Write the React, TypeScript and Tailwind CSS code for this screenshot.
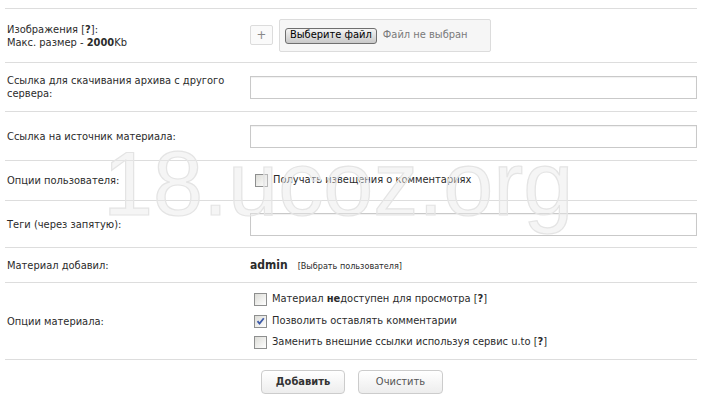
import React from "react";

function Box({ checked = false }: { checked?: boolean }) {
  return (
    <span className="relative inline-flex w-[13px] h-[13px] shrink-0 border border-[#8e8f8f] bg-gradient-to-br from-[#dcdcd7] to-[#ffffff]">
      {checked && (
        <svg viewBox="0 0 11 11" className="absolute left-0 top-0 w-[11px] h-[11px]">
          <path d="M2.5 5.2 L4.5 7.5 L8.8 2.2" fill="none" stroke="#3d5aa8" strokeWidth="1.8" />
        </svg>
      )}
    </span>
  );
}

function Help() {
  return (
    <span>
      [<b className="font-bold">?</b>]
    </span>
  );
}

function TextField() {
  return (
    <div className="w-[447px] h-[23px] border border-[#c9c9c9] bg-white shadow-[inset_0_1px_1px_rgba(0,0,0,0.06)]" />
  );
}

export default function App() {
  const row = "flex items-center border-b border-[#dddddd]";
  const label = "w-[245px] pl-[2px] leading-[13px]";

  return (
    <div className="relative w-[709px] h-[412px] overflow-hidden bg-white text-[11px] text-[#2b2b2b] font-['Tahoma','DejaVu_Sans_Condensed','Liberation_Sans',sans-serif]">
      <div className="pt-2 pl-[5px] w-[697px]">
        <div className="border-t border-[#dddddd]">
          {/* images */}
          <div className={`${row} h-[54px]`}>
            <div className={label}>
              <div>
                Изображения <Help />:
              </div>
              <div>
                Макс. размер - <b className="font-bold">2000</b>Kb
              </div>
            </div>
            <div className="flex items-center gap-[6px]">
              <div className="w-[23px] h-[20px] flex items-center justify-center border border-[#dcdcdc] rounded-[2px] bg-[#fafafa] text-[#888] text-[13px] mb-[2px]">
                +
              </div>
              <div className="w-[212px] h-[33px] flex items-center gap-[6px] pl-[5px] border border-[#dcdcdc] rounded-[2px] bg-[#f6f6f6]">
                <div className="h-[16px] px-[4px] flex items-center border border-[#6f6f6f] rounded-[3px] bg-gradient-to-b from-[#f4f4f4] to-[#c8c8c8] text-[11px] text-black whitespace-nowrap">
                  Выберите файл
                </div>
                <span className="text-[11px] text-[#7a7a7a] whitespace-nowrap">Файл не выбран</span>
              </div>
            </div>
          </div>

          {/* archive */}
          <div className={`${row} h-[49px]`}>
            <div className={label}>
              <div>Ссылка для скачивания архива с другого</div>
              <div>сервера:</div>
            </div>
            <TextField />
          </div>

          {/* source */}
          <div className={`${row} h-[49px]`}>
            <div className={label}>Ссылка на источник материала:</div>
            <TextField />
          </div>

          {/* user options */}
          <div className={`${row} h-[40px]`}>
            <div className={label}>Опции пользователя:</div>
            <div className="flex items-center gap-[5px] pl-[5px]">
              <Box />
              <span>Получать извещения о комментариях</span>
            </div>
          </div>

          {/* tags */}
          <div className={`${row} h-[47px]`}>
            <div className={label}>Теги (через запятую):</div>
            <TextField />
          </div>

          {/* author */}
          <div className={`${row} h-[35px]`}>
            <div className={label}>Материал добавил:</div>
            <div className="flex items-baseline gap-[10px]">
              <b className="font-bold text-[12px]">admin</b>
              <span className="text-[9px]">[Выбрать пользователя]</span>
            </div>
          </div>

          {/* material options */}
          <div className={`${row} h-[77px]`}>
            <div className={label}>Опции материала:</div>
            <div className="flex flex-col gap-[5px] pl-[4px]">
              <div className="flex items-center gap-[5px]">
                <Box />
                <span>
                  Материал <b className="font-bold">не</b>доступен для просмотра <Help />
                </span>
              </div>
              <div className="flex items-center gap-[5px]">
                <Box checked />
                <span>Позволить оставлять комментарии</span>
              </div>
              <div className="flex items-center gap-[5px]">
                <Box />
                <span>
                  Заменить внешние ссылки используя сервис u.to <Help />
                </span>
              </div>
            </div>
          </div>
        </div>

        {/* actions */}
        <div className="flex gap-[13px] mt-[10px] ml-[256px]">
          <button className="w-[84px] h-[24px] rounded-[4px] border border-[#cccccc] bg-gradient-to-b from-white to-[#ededed] font-bold text-[#333]">
            Добавить
          </button>
          <button className="w-[85px] h-[24px] rounded-[4px] border border-[#cccccc] bg-gradient-to-b from-white to-[#ededed] text-[#555]">
            Очистить
          </button>
        </div>
      </div>

      {/* watermark */}
      <div className="pointer-events-none absolute left-[103px] top-[139px] leading-none text-[90px] font-['Liberation_Sans',sans-serif] text-[#e8e8e8]/45 [-webkit-text-stroke:1.2px_#e4e4e4]">
        18.ucoz.org
      </div>
    </div>
  );
}
